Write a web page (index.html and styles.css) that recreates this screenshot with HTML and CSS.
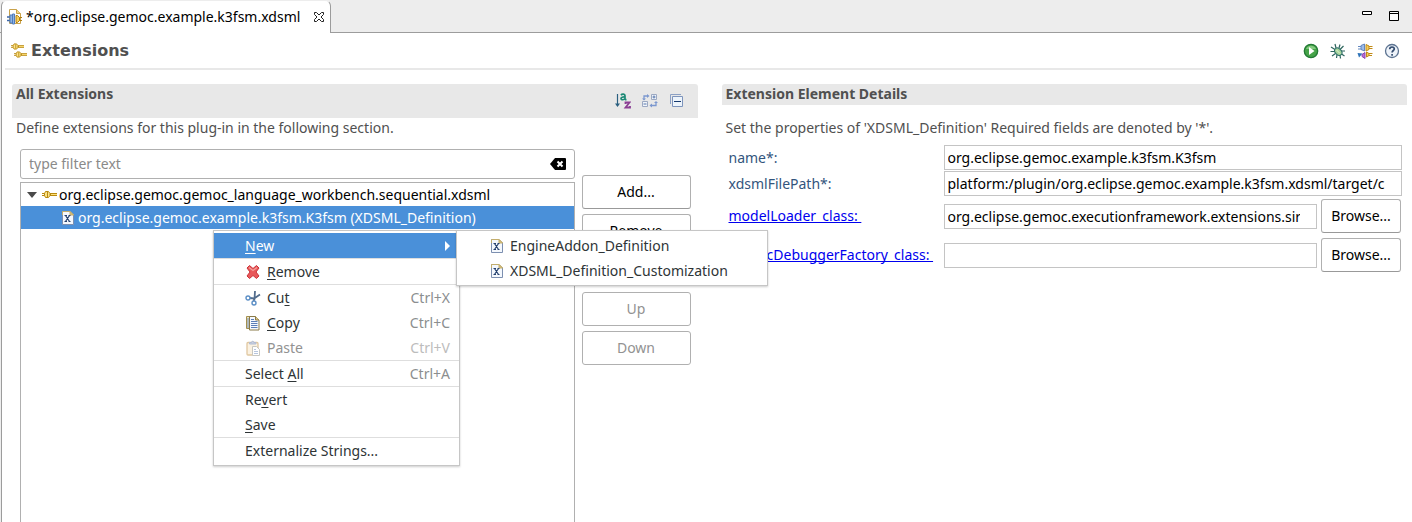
FILE: index.html
```html
<!DOCTYPE html>
<html lang="en">
<head>
<meta charset="utf-8">
<title>org.eclipse.gemoc.example.k3fsm.xdsml</title>
<link rel="stylesheet" href="styles.css">
</head>
<body>
<svg class="defs" aria-hidden="true">
  <symbol id="plug" viewBox="0 0 15 7">
    <path d="M0 2.500h3M0 4.500h3" stroke="#b8860b" stroke-width="1" fill="none"/>
    <path d="M8 2h7v3H8z" fill="#b98a10"/><path d="M9 3h6v1H9z" fill="#ffe27a"/>
    <path d="M3.500.5h3l1.500 2v2l-1.500 2h-3l-1-2v-2z" fill="#fbe38b" stroke="#b98a10"/>
    <path d="M5.500 1v5" stroke="#b98a10"/>
  </symbol>
  <symbol id="xfile" viewBox="0 0 12 14">
    <path d="M.5.500h7.500l3.500 3.500v9.500H.5z" fill="#f4f8fd" stroke="#7c8fb0"/>
    <path d="M.5 4V.500h7.500l3.500 3.500" fill="none" stroke="#c4ae6c"/>
    <path d="M8 .5V4h3.500z" fill="#dcc37c" stroke="#c4ae6c"/>
    <path d="M3.500 4.500l4 6M7.500 4.500l-4 6M2.500 4.500h2.500M6.500 4.500h2M2.500 10.500h2.500M6.500 10.500h2" stroke="#24406e" stroke-width="1.200" fill="none"/>
  </symbol>
</svg>

<div class="workbench">
  <header class="tabs">
    <div class="tab">
      <svg width="15" height="16" viewBox="0 0 15 16">
        <path d="M2.500.5h7l4 4v10h-11z" fill="#fff" stroke="#c9a24a"/>
        <path d="M9.500.5v4h4" fill="#f1d48a" stroke="#c9a24a"/>
        <path d="M0 8h3M0 11.500h3" stroke="#3d67a8" stroke-width="1.600"/>
        <path d="M3 6h2.500v8H3zM5.500 5h2v10h-2z" fill="#8fb4e3" stroke="#4f7cc0"/>
        <path d="M9 6.500h1.500l2 2v3l-2 2H9z" fill="#f5cf5a" stroke="#b07d10"/>
        <path d="M12.500 8.500H15M12.500 11.500H15" stroke="#b07d10"/>
      </svg>
      <span class="tab-name">*org.eclipse.gemoc.example.k3fsm.xdsml</span>
      <button class="icon-btn" aria-label="Close">
        <svg width="10" height="10" viewBox="0 0 10 10"><path d="M.5.500h2L5 3 7.500.5h2v2L7 5l2.500 2.500v2h-2L5 7 2.500 9.500h-2v-2L3 5 .5 2.500z" fill="#fff" stroke="#222"/></svg>
      </button>
    </div>
    <div class="window-tools">
      <button class="icon-btn" aria-label="Minimize"><svg width="10" height="10" viewBox="0 0 10 10"><path d="M.5.500h9v3h-9z" fill="#fff" stroke="#000"/></svg></button>
      <button class="icon-btn" aria-label="Maximize"><svg width="10" height="10" viewBox="0 0 10 10"><path d="M.5.500h9v9h-9zM0 2.500h10" fill="#fff" stroke="#000"/></svg></button>
    </div>
  </header>

  <main class="editor">
    <div class="form-head">
      <svg width="16" height="15" viewBox="0 0 16 15"><use href="#plug" width="13" height="7"/><use href="#plug" x="3" y="8" width="13" height="7"/></svg>
      <h1>Extensions</h1>
      <div class="head-tools">
        <button class="icon-btn" aria-label="Run"><svg width="16" height="16" viewBox="0 0 16 16"><circle cx="8" cy="8" r="6.700" fill="#45a348" stroke="#237a35" stroke-width="1.300"/><path d="M3 6a5.500 5.500 0 0 1 10 0z" fill="#84c97f"/><path d="M6 4v8l5.500-4z" fill="#fff"/></svg></button>
        <button class="icon-btn" aria-label="Debug"><svg width="16" height="16" viewBox="0 0 16 16"><path d="M5 1l1 4M10 1.500L9 5M1 4l4 2.500M.5 8.500H5M2 13l3.500-2.500M6.500 15l.5-3.500M10.500 15.500L10 12M15 8h-4M14.500 13l-3-2M13.500 3L10 6.500" fill="none" stroke="#2f665e" stroke-width="1.200"/><ellipse cx="8.300" cy="8.700" rx="3" ry="4.200" transform="rotate(-45 8.300 8.700)" fill="#a5d39c" stroke="#2b6b68"/><path d="M6.500 7l3.500 3.500" stroke="#e3f5cf"/></svg></button>
        <button class="icon-btn" aria-label="Export"><svg width="16" height="16" viewBox="0 0 16 16"><path d="M1 3.500h4M1 6h4" stroke="#6287bf"/><path d="M4 2.500L7.500 1v7L4 6.500z" fill="#9dbbe8" stroke="#6287bf"/><path d="M9 1.500l3 1.500v3.500L9 8z" fill="#f6cf5c" stroke="#c08a16"/><path d="M12 3.500h3.500M12 5.500h3.500" stroke="#c08a16"/><path d="M.5 10l5 .5-3.500 4z" fill="#2c72b8"/><path d="M5 11.500l3-2v6l-3-2z" fill="#b66fd6" stroke="#8f44b3"/><path d="M9.500 9l2.500 1.500v2L9.500 14z" fill="#f6cf5c" stroke="#c08a16"/><path d="M12 10.500h3.500M12 12.500h3" stroke="#c08a16"/></svg></button>
        <button class="icon-btn" aria-label="Help"><svg width="16" height="16" viewBox="0 0 16 16"><circle cx="8" cy="8" r="6.500" fill="#eef3fa" stroke="#5c7391" stroke-width="1.300"/><path d="M5.700 6.300c0-3 4.600-3 4.600-.3 0 1.500-2.200 1.600-2.200 3.500M8.100 11v1.700" fill="none" stroke="#344d70" stroke-width="1.700"/></svg></button>
      </div>
    </div>

    <div class="columns">
      <section class="section">
        <div class="bar bar-tall">
          <h2>All Extensions</h2>
          <div class="bar-tools">
            <button class="icon-btn" aria-label="Sort"><svg width="16" height="16" viewBox="0 0 16 16"><path d="M2.500 1v12" stroke="#2b6080" stroke-width="1.200"/><path d="M0 10.500h5L2.500 14z" fill="#2b6080"/><path d="M6 2.200c1-1.500 4-1.300 4 .5V7M10 4c-2-.2-4 .2-4 1.500C6 7.300 9.500 7 10 5.500M10 6.700h1.500" stroke="#1d8a76" stroke-width="1.700" fill="none"/><path d="M10.500 11V9.500h4L10.500 14.500h4.500V13" stroke="#8b3f94" stroke-width="1.800" fill="none"/></svg></button>
            <button class="icon-btn" aria-label="Toggle expand"><svg width="16" height="16" viewBox="0 0 16 16"><path d="M9.500 1.500h5v5h-5zM.5 8.500h5v5h-5z" fill="#f2f5fa" stroke="#9ca9c2"/><path d="M10.500 4h3M12 2.500v3M1.500 11h3" stroke="#5577ad"/><path d="M2 6.500V3h4M8.500 12.500H14V9" stroke="#7c98cf" fill="none" stroke-width="1.300"/><path d="M0 5.500h4L2 7.500zM5 1l2.500 2L5 5zM12 10l2-2 2 2zM10 10.500l-2.500 2 2.500 2z" fill="#7c98cf"/></svg></button>
            <button class="icon-btn" aria-label="Collapse all"><svg width="16" height="16" viewBox="0 0 16 16"><path d="M1.500 11V1.500H12" fill="none" stroke="#8ba0c4"/><path d="M3.500 3.500h10v10h-10z" fill="#edf4fb" stroke="#7d94bc"/><path d="M5 8.500h7" stroke="#15396e"/></svg></button>
          </div>
        </div>
        <p class="desc">Define extensions for this plug-in in the following section.</p>
        <div class="split">
          <div class="tree-col">
            <div class="filter">
              <input type="text" aria-label="Filter" placeholder="type filter text">
              <button class="icon-btn" aria-label="Clear"><svg width="16" height="12" viewBox="0 0 16 12"><path d="M5 0h10a1 1 0 0 1 1 1v10a1 1 0 0 1-1 1H5L0 6z" fill="#000"/><path d="M7.500 3.500l5 5M12.500 3.500l-5 5" stroke="#fff" stroke-width="2"/></svg></button>
            </div>
            <ul class="tree" role="tree">
              <li class="node" role="treeitem" aria-expanded="true">
                <svg width="10" height="6" viewBox="0 0 10 6"><path d="M0 0h10L5 6z" fill="#4a4a4a"/></svg>
                <svg class="plug" width="15" height="7"><use href="#plug"/></svg>
                <span>org.eclipse.gemoc.gemoc_language_workbench.sequential.xdsml</span>
              </li>
              <li class="node child selected" role="treeitem" aria-selected="true">
                <svg width="12" height="14"><use href="#xfile"/></svg>
                <span>org.eclipse.gemoc.example.k3fsm.K3fsm (XDSML_Definition)</span>
              </li>
            </ul>
          </div>
          <div class="actions">
            <button class="btn">Add...</button>
            <button class="btn">Remove</button>
            <button class="btn after-gap" disabled>Up</button>
            <button class="btn" disabled>Down</button>
          </div>
        </div>
      </section>

      <section class="section">
        <div class="bar"><h2>Extension Element Details</h2></div>
        <p class="desc desc-details">Set the properties of 'XDSML_Definition' Required fields are denoted by '*'.</p>
        <div class="fields">
          <div class="field">
            <label for="name">name*:</label>
            <input id="name" type="text" value="org.eclipse.gemoc.example.k3fsm.K3fsm">
          </div>
          <div class="field">
            <label for="path">xdsmlFilePath*:</label>
            <input id="path" type="text" value="platform:/plugin/org.eclipse.gemoc.example.k3fsm.xdsml/target/classes/">
          </div>
          <div class="field browse">
            <a href="#loader" id="loader-label">modelLoader_class: </a>
            <input id="loader" type="text" aria-labelledby="loader-label" value="org.eclipse.gemoc.executionframework.extensions.sirius.modelloader.DefaultModelLoader">
            <button class="btn">Browse...</button>
          </div>
          <div class="field browse">
            <a href="#debugger" id="debugger-label">gemocDebuggerFactory_class: </a>
            <input id="debugger" type="text" aria-labelledby="debugger-label">
            <button class="btn">Browse...</button>
          </div>
        </div>
      </section>
    </div>
  </main>
</div>

<div class="menu context" role="menu">
  <button class="item active" role="menuitem"><span><u>N</u>ew</span><svg class="end" width="5" height="10" viewBox="0 0 5 10"><path d="M0 0l5 5-5 5z" fill="#fff"/></svg></button>
  <hr>
  <button class="item" role="menuitem"><svg width="16" height="16" viewBox="0 0 16 16"><path d="M2 4l2.500-2.500L8 4.500l3.500-3L14 4l-3 4 3 4-2.500 2.500L8 11.500l-3.500 3L2 12l3-4z" fill="#e8585a" stroke="#cc3238" stroke-linejoin="round"/><path d="M4 3.500l4 3 4-3" fill="none" stroke="#f4a09b" stroke-width="1.200"/></svg><span><u>R</u>emove</span></button>
  <hr>
  <button class="item" role="menuitem"><svg width="16" height="16" viewBox="0 0 16 16"><path d="M10 1L9.500 9 8.500 11M15 4.500L9 8.500 5 8" fill="none" stroke="#526c8c" stroke-width="1.800"/><circle cx="3" cy="8" r="2" fill="#fff" stroke="#5c8fc6" stroke-width="1.400"/><circle cx="9" cy="13" r="2" fill="#fff" stroke="#5c8fc6" stroke-width="1.400"/></svg><span>Cu<u>t</u></span><kbd>Ctrl+X</kbd></button>
  <button class="item" role="menuitem"><svg width="16" height="16" viewBox="0 0 16 16"><path d="M1.500 1.500h6v12h-6z" fill="#efe5be" stroke="#a38f4e"/><path d="M2 4h3M2 6h3M2 8h3M2 10h3M2 12h3" stroke="#718cb8"/><path d="M4.500 1.500h6l3.500 3.500v10H4.500z" fill="#f5f9ff" stroke="#8a7a48"/><path d="M10.500 1.500V5H14" fill="#dfc98a" stroke="#8a7a48"/><path d="M6 4.500h3M6 6.500h6.500M6 8.500h6.500M6 10.500h6.500M6 12.500h6.500" stroke="#5b7eb7"/></svg><span><u>C</u>opy</span><kbd>Ctrl+C</kbd></button>
  <button class="item" role="menuitem" disabled><svg width="16" height="16" viewBox="0 0 16 16"><rect x="2" y="2.500" width="11" height="12.500" rx="1" fill="#fbf2e2" stroke="#e0c7a0" stroke-width="1.300"/><path d="M4.500 4V2.500h2a1.200 1.200 0 0 1 2.400 0h2V4z" fill="#c9d1e2" stroke="#b2bdd4"/><path d="M7.500 6.500h4l3 3v6h-7z" fill="#fff" stroke="#c8c8c2"/><path d="M9 9.500h2M9 11.500h4M9 13.500h4" stroke="#b7c6de"/></svg><span>Paste</span><kbd>Ctrl+V</kbd></button>
  <hr>
  <button class="item" role="menuitem"><span>Select <u>A</u>ll</span><kbd>Ctrl+A</kbd></button>
  <hr>
  <button class="item" role="menuitem"><span>Re<u>v</u>ert</span></button>
  <button class="item" role="menuitem"><span><u>S</u>ave</span></button>
  <hr>
  <button class="item" role="menuitem"><span>Externalize Strings...</span></button>
</div>

<div class="menu submenu" role="menu">
  <button class="item" role="menuitem"><svg width="12" height="14"><use href="#xfile"/></svg><span>EngineAddon_Definition</span></button>
  <button class="item" role="menuitem"><svg width="12" height="14"><use href="#xfile"/></svg><span>XDSML_Definition_Customization</span></button>
</div>
</body>
</html>
```
FILE: styles.css
```css
* { box-sizing: border-box; }

body {
  margin: 0;
  background: #fff;
  color: #000;
  font: 14px/20px "Noto Sans", "Open Sans", sans-serif;
  overflow: hidden;
}

button, input { font: inherit; color: inherit; }
h1, h2, p, ul { margin: 0; padding: 0; }
svg { display: block; flex: none; }
.defs { position: absolute; width: 0; height: 0; }

.icon-btn { display: block; padding: 0; border: 0; background: none; }

.workbench {
  display: flex;
  flex-direction: column;
  height: 100vh;
  background: #ededed;
}

/* Editor tabs */
.tabs {
  display: flex;
  flex: none;
  height: 33px;
  justify-content: space-between;
  box-shadow: inset 0 -1px #9c9c9c;
  padding-left: 1px;
}
.tab {
  display: flex;
  align-items: center;
  gap: 4px;
  padding: 0 6px 0 5px;
  background: #fff;
  border: 1px solid #9c9c9c;
  border-bottom: 0;
  border-top-color: #ededed;
  border-radius: 6px 6px 0 0;
}
.tab-name { margin-right: 10px; }
.window-tools { display: flex; align-items: flex-start; gap: 17px; padding: 11px 13px 0 0; }

.editor {
  display: flex;
  flex-direction: column;
  flex: 1;
  min-height: 0;
  margin-left: 1px;
  border-left: 1px solid #9c9c9c;
  background: #fff;
}
.form-head {
  display: flex;
  align-items: center;
  gap: 4px;
  height: 37px;
  margin-left: 3px;
  padding: 0 12px 0 6px;
  border-bottom: 2px solid #e8e8e8;
}
h1 { font: bold 16px/20px "DejaVu Sans", sans-serif; color: #505050; }
.head-tools { display: flex; gap: 11px; margin-left: auto; }

/* Form sections */
.columns {
  display: grid;
  grid-template-columns: 1fr 1fr;
  gap: 24px;
  flex: 1;
  min-height: 0;
  padding: 14px 5px 0 10px;
}
.section { display: flex; flex-direction: column; min-width: 0; min-height: 0; }
.bar {
  display: flex;
  justify-content: space-between;
  flex: none;
  height: 21px;
  padding: 0 4px;
  background: #e8e8e8;
  border-radius: 3px 3px 0 0;
}
.bar-tall { height: 34px; }
h2 { font-size: 14px; line-height: 20px; color: #505050; }
.bar-tools { display: flex; align-items: center; gap: 11px; padding-right: 9px; }
.desc { color: #505050; padding: 0 4px; white-space: nowrap; }
.desc-details { padding-top: 13px; }

.split { display: flex; gap: 7px; flex: 1; min-height: 0; padding: 11px 7px 0 8px; }
.tree-col { display: flex; flex-direction: column; flex: 1; gap: 3px; min-width: 0; }
.filter {
  display: flex;
  align-items: center;
  flex: none;
  height: 30px;
  padding: 0 8px;
  border: 1px solid #b0b0b0;
  border-radius: 3px;
}
.filter input { flex: 1; min-width: 0; padding: 0; border: 0; outline: 0; background: none; }
.filter input::placeholder { color: #8a8a8a; opacity: 1; }
.tree { flex: 1; list-style: none; border: 1px solid #b0b0b0; border-bottom: 0; }
.node { display: flex; align-items: center; height: 23px; padding-left: 6px; white-space: nowrap; }
.plug { margin: 0 2px 0 5px; }
.child { gap: 4px; padding-left: 41px; }
.selected { background: #4a90d9; color: #fff; }

.actions { display: flex; flex-direction: column; gap: 5px; width: 109px; padding-top: 26px; }
.btn {
  flex: none;
  height: 34px;
  padding: 0 4px;
  border: 1px solid #b0b0b0;
  border-bottom-color: #999;
  border-radius: 3px;
  background: #fff;
}
.btn:disabled { color: #929292; border-color: #b0b0b0; }
.after-gap { margin-top: 39px; }

.fields { display: flex; flex-direction: column; padding: 7px 5px 0 7px; }
.field {
  display: grid;
  grid-template-columns: 215px 1fr;
  align-items: center;
  margin-bottom: 1px;
  white-space: nowrap;
}
.field label { color: #33557d; }
.field a {
  justify-self: start;
  white-space: pre;
  color: #0000ee;
  text-decoration-skip-ink: none;
}
.field input {
  width: 100%;
  height: 25px;
  padding: 0 16px 0 3px;
  border: 1px solid #c4c4c4;
  outline: 0;
}
.browse { grid-template-columns: 215px 1fr 80px; margin: 2px 1px 3px 0; }
.browse input { width: calc(100% - 4px); }

/* Menus */
.menu {
  position: absolute;
  padding: 2px 0;
  background: #fff;
  border: 1px solid #c6c6c6;
  box-shadow: 0 1px 2px rgba(0, 0, 0, .2);
  color: #2e3436;
}
.context { left: 213px; top: 230px; width: 247px; }
.submenu { left: 456px; top: 230px; width: 312px; }
.menu hr { margin: 0; border: 0; border-top: 1px solid #dedede; }
.item {
  display: flex;
  align-items: center;
  gap: 6px;
  width: 100%;
  height: 25px;
  padding: 0 9px 0 31px;
  border: 0;
  background: none;
  text-align: left;
  white-space: nowrap;
}
.item u { text-underline-offset: 2px; }
.item kbd { margin-left: auto; font: inherit; color: #8b8e8f; }
.item:disabled { color: #929292; }
.item:disabled kbd { color: #bcbcbc; }
.end { margin-left: auto; }
.active { background: #4a90d9; color: #fff; }
.submenu .item { gap: 7px; padding-left: 34px; }
```
